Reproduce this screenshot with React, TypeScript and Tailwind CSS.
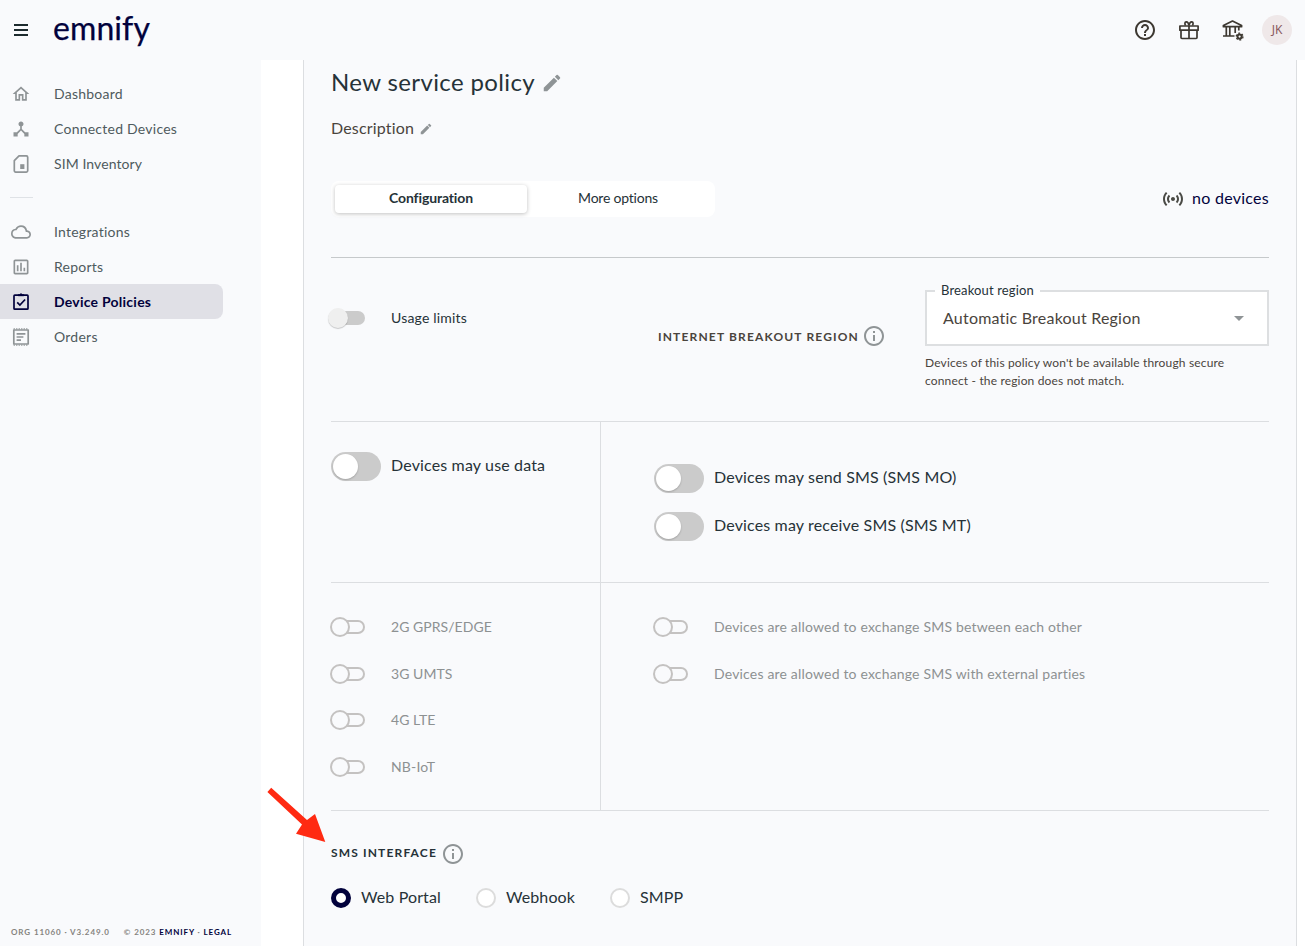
import React from "react";
import { MdDeviceHub, MdEdit, MdHelpOutline, MdInfoOutline, MdOutlineCloud, MdOutlineHome, MdOutlineInsertChart, MdSensors } from "react-icons/md";

function SimIcon() {
  return (
    <svg viewBox="0 0 20 20" className="size-5" fill="none" stroke="currentColor" strokeWidth="1.7">
      <path d="M8 1.9h7.4a1.3 1.3 0 0 1 1.3 1.3v13.6a1.3 1.3 0 0 1-1.3 1.3H4.6a1.3 1.3 0 0 1-1.3-1.3V6.6z" strokeLinejoin="round" />
      <rect x="9.2" y="10.2" width="4.2" height="4.8" fill="currentColor" stroke="none" />
    </svg>
  );
}

function PolicyIcon() {
  return (
    <svg viewBox="0 0 20 20" className="size-5" fill="none" stroke="currentColor" strokeWidth="1.7">
      <rect x="3" y="3.2" width="14" height="14" rx="0.8" />
      <path d="M7.2 2.6h1.4a1.5 1.5 0 0 1 2.8 0h1.4v1.200H7.2z" fill="currentColor" strokeWidth="0.6" />
      <path d="M6.2 10.4l2.7 2.7 5.2-5.6" />
    </svg>
  );
}

function OrdersIcon() {
  return (
    <svg viewBox="0 0 20 20" className="size-5" fill="none" stroke="currentColor" strokeWidth="1.7">
      <path d="M2.8 2.4v15.2M17.2 2.4v15.2M2.5 3h15M2.5 17h15" />
      <path d="M2.6 1.9h15M2.6 18.1h15" strokeWidth="1.4" strokeDasharray="1.3 1.2" />
      <path d="M5.6 6.8h8.8M5.6 10h6.8M5.6 13.2h4.4" />
    </svg>
  );
}

function GiftIcon() {
  return (
    <svg viewBox="0 0 24 24" className="size-6" fill="none" stroke="currentColor" strokeWidth="1.7" strokeLinejoin="round">
      <rect x="2.9" y="8" width="18.2" height="4.2" />
      <path d="M4 12.2v7.4a.9.9 0 0 0 .9.9h14.2a.9.9 0 0 0 .9-.9v-7.4M12 8v12.5" />
      <path d="M12 7.6C11.6 5 10.5 3.7 9.2 3.8 7.7 3.9 7.5 6 8.6 7.6M12 7.6C12.4 5 13.5 3.7 14.8 3.8 16.3 3.9 16.5 6 15.4 7.6" />
    </svg>
  );
}

function BankIcon() {
  return (
    <svg viewBox="0 0 24 24" className="size-6" fill="none" stroke="currentColor" strokeWidth="1.7">
      <path d="M2.4 8.7V7.6L11.5 3l9.1 4.6v1.1z" strokeLinejoin="round" />
      <path d="M5.3 9v8.5M8.8 9v8.5M14.2 9v6M17.8 9v3.5M2 18h11.5" />
      <circle cx="18.6" cy="18.6" r="2.1" strokeWidth="2" />
      <circle cx="18.6" cy="18.6" r="3.4" strokeWidth="1.3" strokeDasharray="1.8 1.76" />
    </svg>
  );
}

type NavItemProps = { icon: React.ReactNode; label: string; active?: boolean; tight?: boolean };

function NavItem({ icon, label, active, tight }: NavItemProps) {
  return (
    <a className={active ? "flex h-[35px] w-[223px] items-center rounded-r-lg bg-[#e0e0e6] pl-[11px] font-bold text-[#02023c]" : "flex h-[35px] w-[223px] items-center pl-[11px] text-[#4f5a5e]"}>
      <span className={active ? "flex w-[43px]" : "flex w-[43px] text-[#8f9496]"}>{icon}</span>
      <span className={tight ? "text-[14px] tracking-[0.08px]" : "text-[14px] tracking-[0.24px]"}>{label}</span>
    </a>
  );
}

function BigToggle({ label }: { label: string }) {
  return (
    <label className="flex h-[30px] items-center gap-[10px]">
      <span className="flex h-[29px] w-[50px] items-center rounded-full bg-[#cbcbcb] pl-[2px]">
        <span className="size-[25px] rounded-full bg-white shadow-[0_1px_2px_rgba(0,0,0,0.2)]" />
      </span>
      <span className="pb-[2px] text-[16px] tracking-[0.15px] text-[#263238]">{label}</span>
    </label>
  );
}

function DisabledToggle({ label, spaced }: { label: string; spaced?: boolean }) {
  return (
    <label className="flex h-5 items-center text-[#8d9192]">
      <span className="-ml-px flex w-[61px] items-center">
        <span className="z-10 size-5 rounded-full border-2 border-[#c4c2c1] bg-[#f9fafc]" />
        <span className="-ml-[6px] h-[14px] w-[21px] rounded-r-full border-2 border-l-0 border-[#c4c2c1]" />
      </span>
      <span className={spaced ? "pb-px text-[14px] tracking-[0.18px]" : "pb-px text-[14px] tracking-[0.04px]"}>{label}</span>
    </label>
  );
}

function Radio({ label, checked }: { label: string; checked?: boolean }) {
  return (
    <label className="flex items-center gap-[10px]">
      <span className={checked ? "size-5 rounded-full border-[5px] border-[#02023c] bg-white" : "size-5 rounded-full border-2 border-[#dcdcdc] bg-white"} />
      <span className="pb-px text-[16px] tracking-[0.12px]">{label}</span>
    </label>
  );
}

function Header() {
  return (
    <header className="flex h-[60px] shrink-0 items-center justify-between bg-[#f9fafc] pr-[13px] pl-[14px] text-[#3d3831]">
      <div className="flex items-center">
        <div className="mr-[25px] flex w-[14px] flex-col gap-[3px]">
          <span className="h-[2px] bg-[#1d2b2e]" />
          <span className="h-[2px] bg-[#1d2b2e]" />
          <span className="h-[2px] bg-[#1d2b2e]" />
        </div>
        <span className="pb-[5px] text-[32px] leading-[32px] tracking-[0.09px] text-[#02023c] [-webkit-text-stroke:0.25px_#02023c]">emnify</span>
      </div>
      <div className="flex items-center">
        <MdHelpOutline className="mr-5 size-6" />
        <span className="mr-5"><GiftIcon /></span>
        <span className="mr-[17px]"><BankIcon /></span>
        <span className="flex size-[30px] items-center justify-center rounded-full bg-[#efe8e9] pb-px font-['Noto_Sans',sans-serif] text-[12px] text-[#8a5a60]">JK</span>
      </div>
    </header>
  );
}

function Sidebar() {
  return (
    <aside className="flex w-[261px] shrink-0 flex-col bg-[#f9fafc] pt-4">
      <NavItem icon={<MdOutlineHome className="size-5" />} label="Dashboard" />
      <NavItem icon={<MdDeviceHub className="size-5" />} label="Connected Devices" />
      <NavItem icon={<SimIcon />} label="SIM Inventory" tight />
      <div className="my-4 ml-[10px] h-px w-[23px] bg-[#dfe2e6]" />
      <NavItem icon={<MdOutlineCloud className="size-5" />} label="Integrations" />
      <NavItem icon={<MdOutlineInsertChart className="size-5" />} label="Reports" />
      <NavItem icon={<PolicyIcon />} label="Device Policies" active />
      <NavItem icon={<OrdersIcon />} label="Orders" />
      <footer className="mt-auto mb-2 flex h-3 items-center gap-[14px] pl-[11px] text-[8px] font-bold tracking-[0.9px] text-[#85837e]">
        <span>ORG 11060 · V3.249.0</span>
        <span>© 2023 <span className="text-[#02023c]">EMNIFY</span> · <span className="text-[#02023c]">LEGAL</span></span>
      </footer>
    </aside>
  );
}

function TitleBlock() {
  return (
    <div className="h-[198px] border-b border-[#c6c9cb]">
      <div className="flex h-[46px] items-center gap-[6px]">
        <h1 className="pb-[2px] text-[24px] tracking-[0.37px] text-[#263238]">New service policy</h1>
        <MdEdit className="size-[22px] text-[#8f9496]" />
      </div>
      <div className="flex h-[46px] items-center gap-[5px]">
        <span className="pb-[2px] text-[16px] tracking-[0.17px] text-[#4a443d]">Description</span>
        <MdEdit className="size-[14px] text-[#8f9496]" />
      </div>
      <div className="mt-[29px] flex items-center justify-between">
        <div className="flex h-9 w-[384px] items-center rounded-lg bg-white px-1 text-[14px] text-[#263238]">
          <button className="h-7 w-[192px] rounded bg-white pb-[3px] font-bold tracking-[-0.14px] shadow-[0_1px_4px_rgba(0,0,0,0.25)]">Configuration</button>
          <button className="h-7 w-[182px] pb-[3px] tracking-[-0.21px]">More options</button>
        </div>
        <div className="flex items-center gap-[7px] text-[#02023c]">
          <MdSensors className="size-6 text-[#4a4a45]" />
          <span className="pb-[2px] text-[16px] tracking-[0.26px]">no devices</span>
        </div>
      </div>
    </div>
  );
}

function UsageRow() {
  return (
    <div className="flex h-[164px] border-b border-[#dcdee1]">
      <label className="mt-[50px] flex h-5 w-[327px] items-center">
        <span className="-ml-[3px] flex w-[63px] items-center">
          <span className="z-10 size-5 rounded-full bg-[#efefef] shadow-[0_1px_1px_rgba(0,0,0,0.2)]" />
          <span className="-ml-[10px] h-[14px] w-[27px] rounded-r-full bg-[#cbcbcb]" />
        </span>
        <span className="pb-px text-[14px] tracking-[0.19px] text-[#263238]">Usage limits</span>
      </label>
      <div className="mt-[66px] flex h-6 w-[267px] items-center text-[#4a443d]">
        <span className="mt-[2px] text-[12px] font-bold tracking-[1.16px]">INTERNET BREAKOUT REGION</span>
        <MdInfoOutline className="ml-[3px] size-6 text-[#8f9496]" />
      </div>
      <div className="mt-8 w-[344px] text-[#4a443d]">
        <div className="relative flex h-14 items-center justify-between border-2 border-[#dddfe1] bg-white pr-[23px] pl-4">
          <span className="absolute -top-2.5 left-2 bg-[linear-gradient(#f9fafc_50%,#fff_50%)] px-1.5 text-[13px] leading-[16px] tracking-[0.15px] text-[#263238]">Breakout region</span>
          <span className="text-[16px] tracking-[0.21px]">Automatic Breakout Region</span>
          <span className="border-x-[5px] border-t-[5px] border-x-transparent border-t-[#8f9496]" />
        </div>
        <p className="mt-2 text-[12px] leading-[18px] tracking-[0.16px]">
          Devices of this policy won't be available through secure<br />
          connect - the region does not match.
        </p>
      </div>
    </div>
  );
}

export default function App() {
  return (
    <div className="relative flex h-[946px] w-[1305px] flex-col overflow-hidden bg-white font-[Lato,sans-serif]">
      <Header />
      <div className="flex min-h-0 flex-1">
        <Sidebar />
        <main className="ml-[42px] w-[994px] border-x border-[#dcdee1] bg-[#f9fafc] px-[27px]">
          <TitleBlock />
          <UsageRow />
          <div className="flex h-[161px] border-b border-[#dcdee1]">
            <div className="w-[270px] border-r border-[#dcdee1] pt-[29px]">
              <BigToggle label="Devices may use data" />
            </div>
            <div className="flex flex-col gap-[18px] pt-[41px] pl-[53px]">
              <BigToggle label="Devices may send SMS (SMS MO)" />
              <BigToggle label="Devices may receive SMS (SMS MT)" />
            </div>
          </div>
          <div className="flex h-[228px] border-b border-[#dcdee1]">
            <div className="flex w-[270px] flex-col gap-[26.7px] border-r border-[#dcdee1] pt-[34px]">
              <DisabledToggle label="2G GPRS/EDGE" />
              <DisabledToggle label="3G UMTS" />
              <DisabledToggle label="4G LTE" />
              <DisabledToggle label="NB-IoT" spaced />
            </div>
            <div className="flex flex-col gap-[26.7px] pt-[34px] pl-[53px]">
              <DisabledToggle label="Devices are allowed to exchange SMS between each other" spaced />
              <DisabledToggle label="Devices are allowed to exchange SMS with external parties" spaced />
            </div>
          </div>
          <div className="mt-[31px] flex h-6 items-center text-[#263238]">
            <span className="pb-[2px] text-[12px] font-bold tracking-[1.15px]">SMS INTERFACE</span>
            <MdInfoOutline className="ml-1 size-6 text-[#8f9496]" />
          </div>
          <div className="mt-[19px] flex gap-[35px] text-[#263238]">
            <Radio label="Web Portal" checked />
            <Radio label="Webhook" />
            <Radio label="SMPP" />
          </div>
        </main>
      </div>
      <svg viewBox="0 0 62 58" className="pointer-events-none absolute top-[787px] left-[266px] h-[58px] w-[62px]" fill="#ff2a12">
        <path d="M5.2 .8L1.4 5 36 37.5 30 46.7 59.3 55 49 27 41 33z" />
      </svg>
    </div>
  );
}
